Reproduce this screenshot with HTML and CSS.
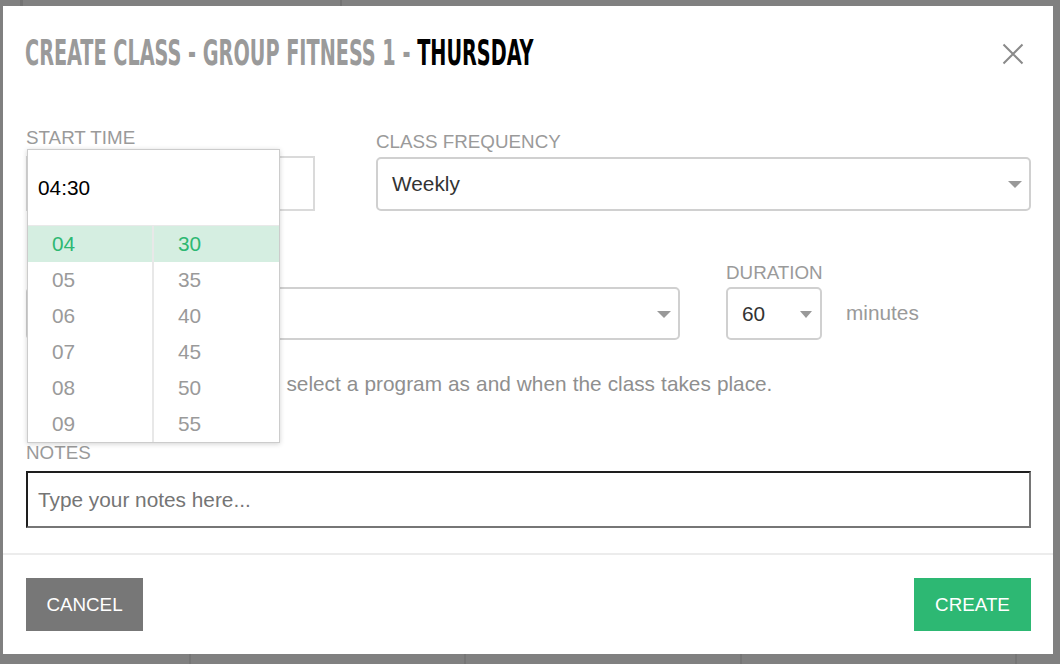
FILE: index.html
```html
<!DOCTYPE html>
<html lang="en">
<head>
<meta charset="utf-8">
<title>Create class</title>
<link rel="stylesheet" href="styles.css">
</head>
<body>
<div class="modal">
  <div class="modal-header">
    <h1 class="title"><span class="title-text">CREATE CLASS - GROUP FITNESS 1 - <span class="title-day">THURSDAY</span></span></h1>
    <button class="close" aria-label="Close">
      <svg width="22" height="22" viewBox="0 0 22 22"><path d="M1.5 1.5L20.5 20.5M20.5 1.5L1.5 20.5" stroke="#8a8a8a" stroke-width="2" fill="none"/></svg>
    </button>
  </div>
  <div class="modal-body">
    <div class="row row-top">
      <div class="field field-start">
        <label class="label label-start">START TIME</label>
        <div class="time-input"></div>
        <div class="time-panel">
          <div class="time-panel-input">04:30</div>
          <div class="time-panel-cols">
            <ul class="time-col time-col-hours">
              <li class="time-opt is-selected">04</li>
              <li class="time-opt">05</li>
              <li class="time-opt">06</li>
              <li class="time-opt">07</li>
              <li class="time-opt">08</li>
              <li class="time-opt">09</li>
            </ul>
            <ul class="time-col time-col-minutes">
              <li class="time-opt is-selected">30</li>
              <li class="time-opt">35</li>
              <li class="time-opt">40</li>
              <li class="time-opt">45</li>
              <li class="time-opt">50</li>
              <li class="time-opt">55</li>
            </ul>
          </div>
        </div>
      </div>
      <div class="field field-freq">
        <label class="label">CLASS FREQUENCY</label>
        <div class="select select-freq"><span class="select-value">Weekly</span><span class="caret"></span></div>
      </div>
    </div>
    <div class="row row-mid">
      <div class="field field-program">
        <label class="label">PROGRAM</label>
        <div class="select select-program"><span class="select-value"></span><span class="caret"></span></div>
      </div>
      <div class="field field-duration">
        <label class="label">DURATION</label>
        <div class="duration-line">
          <div class="select select-duration"><span class="select-value">60</span><span class="caret caret-small"></span></div>
          <span class="unit">minutes</span>
        </div>
      </div>
    </div>
    <p class="help">Leave the program blank to select a program as and when the class takes place.</p>
    <div class="field field-notes">
      <label class="label label-notes">NOTES</label>
      <div class="notes-box"><span class="placeholder">Type your notes here...</span></div>
    </div>
  </div>
  <div class="modal-footer">
    <button class="btn btn-cancel">CANCEL</button>
    <button class="btn btn-create">CREATE</button>
  </div>
</div>
</body>
</html>
```

FILE: styles.css
```css
html, body {
  margin: 0;
  padding: 0;
}

body {
  height: 664px;
  overflow: hidden;
  background-color: #808080;
  background-image:
    linear-gradient(#767676, #767676),
    linear-gradient(#767676, #767676),
    linear-gradient(#767676, #767676),
    linear-gradient(#767676, #767676),
    linear-gradient(#737373, #737373),
    linear-gradient(#737373, #737373);
  background-size: 2px 14px, 2px 14px, 2px 14px, 2px 14px, 3px 6px, 2px 6px;
  background-position: 189px 100%, 464px 100%, 740px 100%, 1015px 100%, 20px 0, 340px 0;
  background-repeat: no-repeat;
  font-family: "Liberation Sans", Arial, Helvetica, sans-serif;
}

.modal {
  margin: 6px 0 0 3px;
  width: 1050px;
  background: #ffffff;
}

/* header */
.modal-header {
  height: 94px;
  display: flex;
  align-items: center;
  justify-content: space-between;
  padding: 0 29px 0 22px;
  box-sizing: border-box;
}

.title {
  margin: 0;
  font-family: "DejaVu Sans Condensed", "Liberation Sans", sans-serif;
  font-weight: bold;
  font-size: 26px;
  line-height: 26px;
  color: #9a9a9a;
  white-space: nowrap;
}

.title-text {
  display: inline-block;
  transform: scale(0.823, 1.38);
  transform-origin: left center;
}

.title-day {
  color: #000000;
}

.close {
  width: 22px;
  height: 22px;
  padding: 0;
  margin: 0;
  border: 0;
  background: none;
  display: flex;
  margin-top: 1px;
}

/* body */
.modal-body {
  padding: 27px 22px 25px 23px;
}

.row {
  display: flex;
}

.label {
  display: block;
  font-size: 18.8px;
  line-height: 22px;
  color: #9a9a9a;
}

.field-start {
  position: relative;
  width: 289px;
  margin-right: 61px;
}

.label-start {
  margin-bottom: 7px;
}

.time-input {
  height: 55px;
  border: 2px solid #dadada;
  box-sizing: border-box;
}

.field-freq {
  flex: 1;
  padding-top: 4px;
}

.field-freq .label {
  margin-bottom: 4px;
}

.select {
  display: flex;
  align-items: center;
  justify-content: space-between;
  height: 54px;
  box-sizing: border-box;
  border: 2px solid #d0d0d0;
  border-radius: 5px;
  padding: 0 7px 0 14px;
  background: #fff;
}

.select-value {
  font-size: 20.8px;
  color: #333333;
}

.caret {
  width: 0;
  height: 0;
  border-left: 7px solid transparent;
  border-right: 7px solid transparent;
  border-top: 7px solid #999999;
  margin-top: 1px;
}

.caret-small {
  border-left-width: 6.5px;
  border-right-width: 6.5px;
}

.row-mid {
  margin-top: 51px;
}

.row-mid .label {
  margin-bottom: 3px;
}

.row-mid .select {
  height: 53px;
}

.field-program {
  width: 654px;
  margin-right: 46px;
}

.duration-line {
  display: flex;
  align-items: center;
}

.select-duration {
  width: 96px;
  padding-right: 8px;
}

.unit {
  margin-left: 24px;
  margin-top: -2px;
  font-size: 20.8px;
  color: #9a9a9a;
}

.help {
  margin: 32px 0 0;
  font-size: 20.8px;
  line-height: 24px;
  color: #8f8f8f;
  word-spacing: 0.3px;
}

.field-notes {
  margin-top: 46px;
}

.label-notes {
  margin-bottom: 7px;
}

.notes-box {
  height: 57px;
  box-sizing: border-box;
  border: 2px solid;
  border-color: #1e1e1e #767676 #767676 #1e1e1e;
  padding: 0 10px;
  display: flex;
  align-items: center;
}

.placeholder {
  font-size: 20.8px;
  color: #757575;
}

/* time picker dropdown */
.time-panel {
  position: absolute;
  top: 22px;
  left: 1px;
  width: 253px;
  box-sizing: border-box;
  border: 1px solid #cccccc;
  background: #ffffff;
  box-shadow: 0 1px 5px rgba(0, 0, 0, 0.18);
  z-index: 2;
}

.time-panel-input {
  height: 75px;
  line-height: 75px;
  padding-left: 10px;
  font-size: 20.8px;
  color: #000000;
  border-bottom: 1px solid #e9e9e9;
}

.time-panel-cols {
  display: flex;
}

.time-col {
  list-style: none;
  margin: 0;
  padding: 0;
}

.time-col-hours {
  width: 124px;
  border-right: 2px solid #e8e8e8;
}

.time-col-minutes {
  flex: 1;
}

.time-opt {
  height: 36px;
  line-height: 36px;
  padding-left: 24px;
  font-size: 20.8px;
  color: #9a9a9a;
}

.time-opt.is-selected {
  background: #d5eee1;
  color: #2db872;
}

/* footer */
.modal-footer {
  border-top: 2px solid #ececec;
  padding: 23px 22px 23px 23px;
  display: flex;
  justify-content: space-between;
}

.btn {
  width: 117px;
  height: 53px;
  border: 0;
  margin: 0;
  padding: 0;
  font-family: "Liberation Sans", Arial, sans-serif;
  font-size: 18.8px;
  color: #ffffff;
}

.btn-cancel {
  background: #777777;
}

.btn-create {
  background: #2db873;
}
```
